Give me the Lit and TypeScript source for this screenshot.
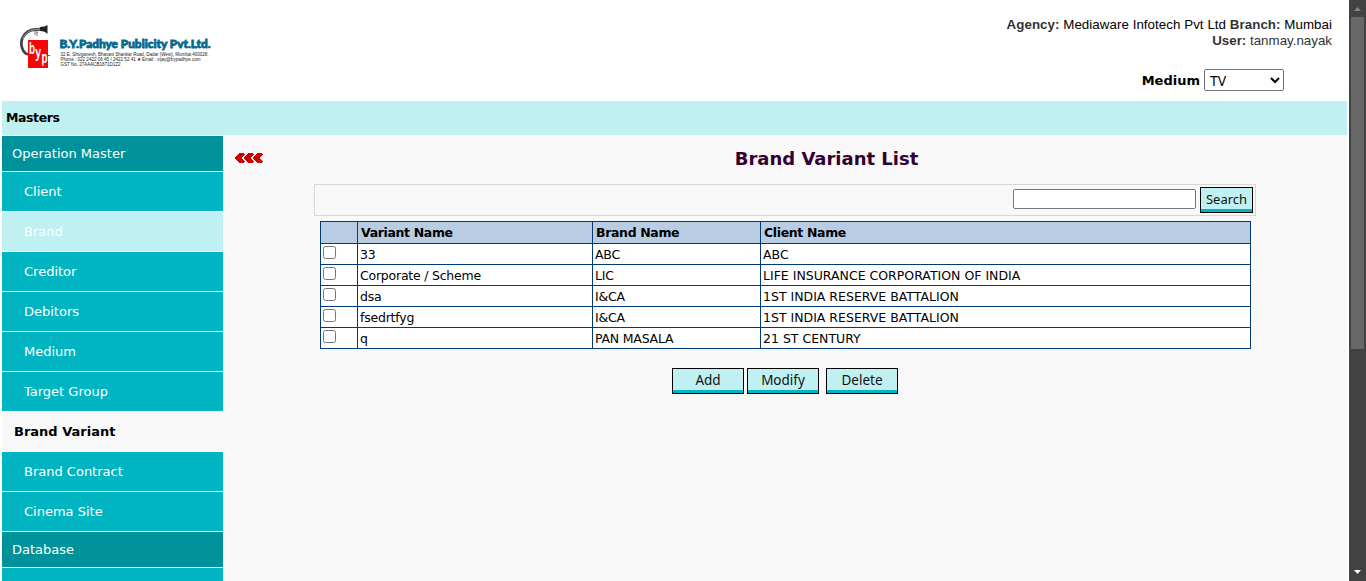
import { LitElement, html, svg, css } from "lit";
import { customElement } from "lit/decorators.js";

const MENU: Array<{ label: string; kind: string }> = [
  { label: "Operation Master", kind: "group" },
  { label: "Client", kind: "item" },
  { label: "Brand", kind: "item hover" },
  { label: "Creditor", kind: "item" },
  { label: "Debitors", kind: "item" },
  { label: "Medium", kind: "item" },
  { label: "Target Group", kind: "item" },
  { label: "Brand Variant", kind: "item current" },
  { label: "Brand Contract", kind: "item" },
  { label: "Cinema Site", kind: "item" },
  { label: "Database", kind: "group" },
  { label: "", kind: "item" },
];

const ROWS = [
  ["33", "ABC", "ABC"],
  ["Corporate / Scheme", "LIC", "LIFE INSURANCE CORPORATION OF INDIA"],
  ["dsa", "I&CA", "1ST INDIA RESERVE BATTALION"],
  ["fsedrtfyg", "I&CA", "1ST INDIA RESERVE BATTALION"],
  ["q", "PAN MASALA", "21 ST CENTURY"],
];

@customElement("company-logo")
export class CompanyLogo extends LitElement {
  static styles = css`
    :host { display: block; }
    svg { display: block; overflow: visible; }
    .name { font: 900 12px Lato, "DejaVu Sans", sans-serif; fill: #04688f; stroke: #04688f; stroke-width: 0.8; }
    .small { font: 5px "Liberation Sans", sans-serif; fill: #222; }
    .mark { font: bold 16px "Liberation Sans", sans-serif; fill: #fff; }
  `;
  render() {
    return html`<svg width="300" height="54" viewBox="0 0 300 54">
      <path d="M18 34.500C11 32 10 22 13 17Q17 10 25 9.500L37 9" fill="none" stroke="#444" stroke-width="2.8"/>
      <path d="M12.500 19Q16 10.500 25 9.500L32 9" fill="none" stroke="#bbb" stroke-width=".7"/>
      <path d="M30 7Q35 7 37.500 5V14Q35 11 30 11Z" fill="#222"/>
      <path d="M24 12h4M27 12v4M25 13v2" stroke="#555" stroke-width=".8" fill="none"/>
      <rect x="18" y="20" width="20" height="28" fill="#f50505"/>
      <path d="M37.500 35.500h2.500" stroke="#333" stroke-width=".8"/>
      <text class="mark" x="19" y="34" textLength="6" lengthAdjust="spacingAndGlyphs">b</text>
      <text class="mark" x="25.200" y="37.500" textLength="5.800" lengthAdjust="spacingAndGlyphs">y</text>
      <text class="mark" x="31.400" y="43" textLength="6" lengthAdjust="spacingAndGlyphs">p</text>
      <text class="name" x="49.500" y="28" textLength="151" lengthAdjust="spacingAndGlyphs">B.Y.Padhye Publicity Pvt.Ltd.</text>
      <text class="small" x="50.500" y="35.500" textLength="148" lengthAdjust="spacingAndGlyphs">32 E, Shivganesh, Bhavani Shankar Road, Dadar (West), Mumbai 400028.</text>
      <text class="small" x="50.500" y="40.500" textLength="140" lengthAdjust="spacingAndGlyphs">Phone : 022 2422 06 45 / 2422 52 41 ★ Email : vijay@bypadhye.com</text>
      <text class="small" x="50.500" y="45.500" textLength="60" lengthAdjust="spacingAndGlyphs">GST No. 27AAACB1871D1Z2</text>
    </svg>`;
  }
}

@customElement("app-root")
export class AppRoot extends LitElement {
  static styles = css`
    :host { display: block; height: 581px; overflow: hidden; background: #fff; color: #000;
      font: 13px/16px Verdana, "DejaVu Sans", sans-serif; }
    * { box-sizing: border-box; }
    .window { display: grid; grid-template-columns: 1349px 17px; height: 581px; }
    .page { padding: 0 2px; height: 581px; overflow: hidden; }
    .head { height: 101px; display: flex; justify-content: space-between; }
    .logo { padding: 20px 0 0 8px; }
    .account { width: 400px; padding: 17px 15px 0 0; text-align: right;
      font: 13.333px/16px "Liberation Sans", Arial, sans-serif; }
    .account b, .user { color: #333; }
    .agency { letter-spacing: 0.05px; }
    .medium { display: flex; justify-content: flex-end; align-items: center; margin: 20px 48px 0 0; gap: 4px;
      font: 13px "DejaVu Sans", sans-serif; }
    .medium b { color: #000; }
    select { width: 80px; height: 22px; font: 14px "Noto Sans", sans-serif; border: 1px solid #767676;
      border-radius: 2px; background: #fff; color: #000; margin: 0; padding: 0 0 2px 1px; }
    .band { height: 34px; background: #c0f0f2; padding: 9px 4px 0; font-weight: bold; font-size: 12.500px; letter-spacing: -0.4px; }
    .body { display: grid; grid-template-columns: 221px 1124px; height: 446px; }
    .menu { padding-top: 1px; display: flex; flex-direction: column; gap: 1px; background: #fff; }
    .entry { flex: none; color: #fff; background: #00b5c1; height: 39px; line-height: 40px; padding-left: 22px; }
    .group { background: #00929b; height: 35px; line-height: 36px; padding-left: 10px; }
    .hover { background: #c0f0f2; }
    .current { background: #f8f8f8; color: #000; font-weight: bold; padding-left: 12px; }
    .main { background: #f8f8f8; display: grid; grid-template-columns: 91px 942px; align-content: start; }
    .back { padding: 18px 0 0 12px; }
    .back svg { display: block; }
    h1 { margin: 0; height: 49px; padding: 12px 0 0 83px; text-align: center; color: #330033;
      font: bold 18px/23px "DejaVu Sans", sans-serif; }
    .searchbar { height: 32px; border: 1px solid #d6d6d6; display: flex; justify-content: flex-end;
      align-items: flex-start; padding: 2px 2px 0; gap: 4px; }
    .searchbar input { width: 183px; height: 20px; margin: 2px 0 0; border: 1px solid #767676; border-radius: 2px; background: #fff; }
    button { width: 72px; height: 26px; padding: 0 0 2px; border: 1px solid #000; background: #c0f0f2;
      box-shadow: inset 0 -3px #00b5c1; color: #111; font: 13.500px/20px "Noto Sans", sans-serif; display: block; }
    .find { width: 53px; font-size: 13px; }
    table { margin: 5px 0 0 6px; width: 931px; table-layout: fixed; border-collapse: separate; border-spacing: 1px;
      background: #003b75; font-size: 12.500px; line-height: 16px; }
    td, th { padding: 0 2px; background: #fff; height: 20px; text-align: left; white-space: nowrap; }
    td { padding-top: 2px; letter-spacing: -0.22px; }
    td:first-child { padding-top: 0; }
    td:last-child { letter-spacing: 0; }
    th { background: #b8cde3; height: 21px; padding-left: 3px; letter-spacing: -0.35px; }
    .c1 { width: 36px; }
    .c2 { width: 234px; }
    .c3 { width: 167px; }
    td input { display: block; width: 13px; height: 13px; margin: 0 0 3px; }
    .actions { display: flex; padding: 19px 0 0 358px; gap: 3px; }
    .last { margin-left: 4px; }
    .scroll { background: #424242; display: flex; flex-direction: column; align-items: center; }
    .scroll svg { display: block; flex: none; }
    .thumb { width: 13px; height: 332px; background: #686868; margin-bottom: auto; }
  `;
  render() {
    return html`<div class="window">
      <div class="page">
        <header class="head">
          <company-logo class="logo"></company-logo>
          <div class="account">
            <div class="agency"><b>Agency:</b> Mediaware Infotech Pvt Ltd <b>Branch:</b> Mumbai</div>
            <div class="user"><b>User:</b> tanmay.nayak</div>
            <div class="medium"><b>Medium</b><select><option>TV</option></select></div>
          </div>
        </header>
        <div class="band">Masters</div>
        <div class="body">
          <nav class="menu">${MENU.map((m) => html`<div class="entry ${m.kind}">${m.label}</div>`)}</nav>
          <main class="main">
            <div class="back">
              <svg width="28" height="10" viewBox="0 0 28 10" shape-rendering="crispEdges">
                ${[0, 9, 18].map((x) => svg`<path transform="translate(${x} 0)" d="M0 5L3 1L5 0H9V1H10L7 4V6L10 9H9V10H5L3 9Z" fill="#d00000"/>`)}
              </svg>
            </div>
            <section>
              <h1>Brand Variant List</h1>
              <div class="searchbar"><input type="text"><button class="find">Search</button></div>
              <table>
                <tr><th class="c1"></th><th class="c2">Variant Name</th><th class="c3">Brand Name</th><th>Client Name</th></tr>
                ${ROWS.map((r) => html`<tr><td><input type="checkbox"></td>${r.map((c) => html`<td>${c}</td>`)}</tr>`)}
              </table>
              <div class="actions"><button>Add</button><button>Modify</button><button class="last">Delete</button></div>
            </section>
          </main>
        </div>
      </div>
      <div class="scroll">
        <svg width="17" height="17"><path d="M5 11L8.500 7L12 11Z" fill="#868686"/></svg>
        <div class="thumb"></div>
        <svg width="17" height="17"><path d="M5 6H12L8.500 10Z" fill="#fff"/></svg>
      </div>
    </div>`;
  }
}
